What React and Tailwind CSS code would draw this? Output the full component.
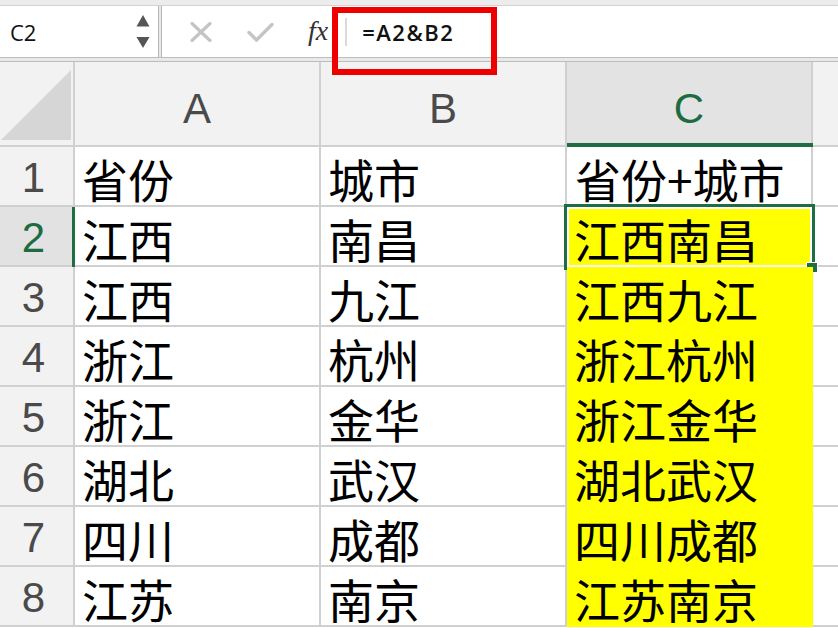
import React from 'react';

const rows = [
  ['1', '省份', '城市', '省份+城市'],
  ['2', '江西', '南昌', '江西南昌'],
  ['3', '江西', '九江', '江西九江'],
  ['4', '浙江', '杭州', '浙江杭州'],
  ['5', '浙江', '金华', '浙江金华'],
  ['6', '湖北', '武汉', '湖北武汉'],
  ['7', '四川', '成都', '四川成都'],
  ['8', '江苏', '南京', '江苏南京'],
];

export default function App() {
  return (
    <div className="relative w-[838px] h-[628px] overflow-hidden bg-white font-['Liberation_Sans',sans-serif]">
      {/* top strip */}
      <div className="h-[6px] bg-[#ececec] border-b border-[#d2d2d2]" />
      {/* formula bar */}
      <div className="flex h-[51px] bg-white">
        <div className="w-[158px] flex items-center justify-between pl-[10px] pr-[8px]">
          <span className="text-[22px] text-[#111] leading-none pt-[1px] font-['Open_Sans',sans-serif]">C2</span>
          <svg width="14" height="34" viewBox="0 0 14 34" className="mt-[1px]">
            <polygon points="0.5,11.5 7,0 13.5,11.5" fill="#555" />
            <polygon points="0.5,22 13.5,22 7,33" fill="#555" />
          </svg>
        </div>
        <div className="w-[4px] border-x border-[#b9b9b9] bg-[#e6e6e6]" />
        <div className="flex items-center flex-1">
          <svg width="22" height="20" viewBox="0 0 22 20" className="ml-[28px]">
            <path d="M2 1.5 L20 18.5 M20 1.5 L2 18.5" stroke="#c4c4c4" strokeWidth="3.2" strokeLinecap="round" />
          </svg>
          <svg width="27" height="20" viewBox="0 0 27 20" className="ml-[35px]">
            <path d="M2 10.5 L9.5 18 L25 2.5" stroke="#c4c4c4" strokeWidth="3.4" fill="none" strokeLinecap="round" strokeLinejoin="round" />
          </svg>
          <span className="ml-[34px] text-[28px] italic leading-none text-[#333] font-['Liberation_Serif',serif] pb-[2px]">fx</span>
          <div className="ml-[17px] w-[2px] h-[28px] bg-[#dadada]" />
          <span className="ml-[15px] text-[22px] font-semibold text-[#111] leading-none tracking-[1.5px] font-['Open_Sans',sans-serif]">=A2&amp;B2</span>
        </div>
      </div>
      <div className="h-[5px] border-y border-[#bdbdbd] bg-[#e9e9e9]" />

      {/* column header row */}
      <div className="flex h-[85px] border-b-2 border-[#d0d0d0] bg-[#f2f2f2]">
        <div className="relative w-[75px] border-r-2 border-[#d0d0d0]">
          <svg width="70" height="70" viewBox="0 0 70 70" className="absolute left-[1px] bottom-[5px]">
            <polygon points="70,0 70,70 0,70" fill="#d6d6d6" />
          </svg>
        </div>
        <div className="w-[246px] border-r-2 border-[#d0d0d0] flex items-center justify-center pt-[10px] text-[42px] text-[#4a4a4a]">A</div>
        <div className="w-[246px] border-r-2 border-[#d0d0d0] flex items-center justify-center pt-[10px] text-[42px] text-[#4a4a4a]">B</div>
        <div className="w-[246px] border-r-2 border-[#d0d0d0] bg-[#e3e3e3] relative flex items-center justify-center pt-[10px] text-[42px] text-[#1d6b40]">
          C
          <div className="absolute left-0 right-[-2px] bottom-[-2px] h-[4px] bg-[#1f6e43]" />
        </div>
        <div className="flex-1" />
      </div>

      {/* data rows */}
      {rows.map(([n, a, b, c]) => {
        const sel = n === '2';
        const yellow = n !== '1';
        return (
          <div key={n} className="flex h-[60px]">
            <div
              className={
                sel
                  ? 'relative w-[75px] border-b-2 border-r-2 border-b-[#d0d0d0] border-r-[#d0d0d0] bg-[#e2e2e2] flex items-center justify-center pr-[6px] pt-[3px] text-[42px] text-[#1d6b40]'
                  : 'w-[75px] border-b-2 border-r-2 border-[#d0d0d0] bg-[#f2f2f2] flex items-center justify-center pr-[6px] pt-[3px] text-[42px] text-[#4a4a4a]'
              }
            >
              {n}
              {sel && <div className="absolute right-[-2px] top-0 bottom-[-2px] w-[3px] bg-[#1f6e43]" />}
            </div>
            <div className="w-[246px] border-b-2 border-r-2 border-[#d0d0d0] flex items-center pl-[7px] pt-[4px] text-[46px] leading-none text-black font-['Noto_Sans_CJK_SC',sans-serif]">{a}</div>
            <div className="w-[246px] border-b-2 border-r-2 border-[#d0d0d0] flex items-center pl-[7px] pt-[4px] text-[46px] leading-none text-black font-['Noto_Sans_CJK_SC',sans-serif]">{b}</div>
            <div
              className={
                yellow
                  ? 'relative w-[246px] border-b-2 border-r-2 border-[#ffff00] bg-[#ffff00] flex items-center pl-[7px] pt-[4px] text-[46px] leading-none text-black font-[\'Noto_Sans_CJK_SC\',sans-serif]'
                  : 'relative w-[246px] border-b-2 border-r-2 border-[#d0d0d0] flex items-center pl-[8px] pt-[4px] text-[46px] leading-none text-black font-[\'Noto_Sans_CJK_SC\',sans-serif]'
              }
            >
              {c}
              {sel && (
                <>
                  <div className="absolute left-[-3px] top-[-3px] right-[-4px] bottom-[-5px] border-[3px] border-[#1f6e43]">
                    <div className="w-full h-full border-2 border-white" />
                  </div>
                  <div className="absolute right-[-7px] bottom-[-8px] w-[12px] h-[11px] bg-[#1f6e43] border border-white" />
                </>
              )}
            </div>
            <div className="flex-1 border-b-2 border-[#d0d0d0]" />
          </div>
        );
      })}

      {/* red annotation box */}
      <div className="absolute left-[332px] top-[7px] w-[165px] h-[68px] border-[6px] border-[#ee0000]" />
    </div>
  );
}
